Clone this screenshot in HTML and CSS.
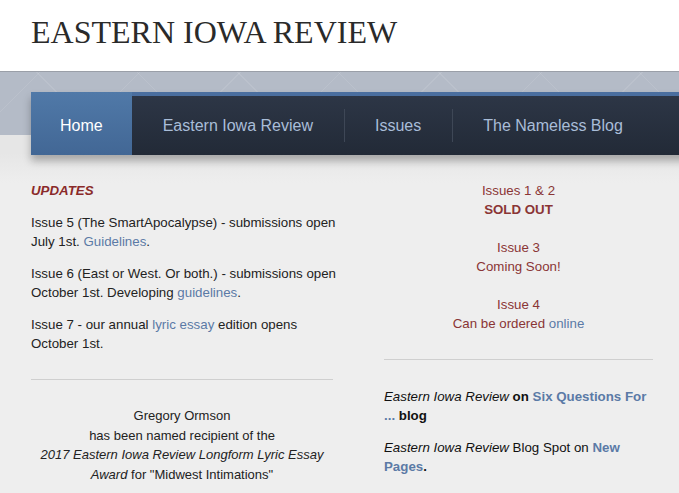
FILE: index.html
```html
<!DOCTYPE html>
<html lang="en">

<head>
    <meta charset="UTF-8">
    <title>Eastern Iowa Review</title>
    <link rel="stylesheet" href="styles.css">
</head>

<body>
    <div class="header">
        <h1 class="site-title">EASTERN IOWA REVIEW</h1>
    </div>
    <div class="band">
        <ul class="nav">
            <li class="current"><a href="#">Home</a></li>
            <li><a href="#">Eastern Iowa Review</a></li>
            <li><a href="#">Issues</a></li>
            <li><a href="#">The Nameless Blog</a></li>
        </ul>
    </div>
    <div class="main">
        <div class="col-left">
            <p class="updates">UPDATES</p>
            <p>Issue 5 (The SmartApocalypse) - submissions open July 1st. <a href="#">Guidelines</a>.</p>
            <p>Issue 6 (East or West. Or both.) - submissions open October 1st. Developing <a href="#">guidelines</a>.</p>
            <p>Issue 7 - our annual <a href="#">lyric essay</a> edition opens October 1st.</p>
            <hr>
            <p class="award">Gregory Ormson<br>has been named recipient of the<br><em>2017 Eastern Iowa Review Longform Lyric Essay Award</em> for "Midwest Intimations"</p>
        </div>
        <div class="col-right">
            <p class="issue">Issues 1 &amp; 2<br><strong>SOLD OUT</strong></p>
            <p class="issue">Issue 3<br>Coming Soon!</p>
            <p class="issue">Issue 4<br>Can be ordered <a href="#">online</a></p>
            <hr>
            <p class="press"><em>Eastern Iowa Review</em> <strong>on <a href="#">Six Questions For ...</a> blog</strong></p>
            <p class="press"><em>Eastern Iowa Review</em> Blog Spot on <strong><a href="#">New Pages</a>.</strong></p>
        </div>
    </div>
</body>

</html>
```

FILE: styles.css
```css
* {
    padding: 0;
    margin: 0;
}
html, body {
    overflow: hidden;
}
body {
    background: #eee;
    font-family: "Liberation Sans", Arial, sans-serif;
    font-size: 13.3px;
    line-height: 19px;
    color: #222;
}
a {
    color: #5b7aa6;
    text-decoration: none;
}
.header {
    height: 71px;
    background: #fff;
}
.site-title {
    padding: 12px 0 0 31px;
    font-family: "Liberation Serif", "Times New Roman", serif;
    font-weight: normal;
    font-size: 32px;
    line-height: 40px;
    color: #2a2a2a;
    white-space: nowrap;
}
.band {
    height: 43px;
    padding-top: 20px;
    border-top: 1px solid #9a9fa8;
    background-color: #b4bbc7;
    background-image:
        repeating-linear-gradient(45deg, transparent 0, transparent 70px, rgba(255, 255, 255, 0.09) 70px, rgba(255, 255, 255, 0.09) 71px),
        repeating-linear-gradient(-45deg, transparent 0, transparent 70px, rgba(255, 255, 255, 0.09) 70px, rgba(255, 255, 255, 0.09) 71px);
}
.nav {
    list-style: none;
    display: flex;
    width: 929px;
    height: 59px;
    margin-left: 31px;
    border-top: 4px solid #4a6e9f;
    background: linear-gradient(#2d3646, #222a37);
    box-shadow: 0 6px 8px rgba(0, 0, 0, 0.28);
    position: relative;
}
.nav li {
    display: flex;
    align-items: center;
    padding: 0 31px;
    position: relative;
}
.nav li + li::before {
    content: "";
    position: absolute;
    left: 0;
    top: 13px;
    bottom: 13px;
    border-left: 1px solid #3e4756;
}
.nav li:nth-child(2)::before {
    display: none;
}
.nav a {
    font-size: 16px;
    color: #a9bdd8;
}
.nav li.current {
    margin-top: -4px;
    padding: 4px 29px 0 29px;
    background: linear-gradient(#5079a8, #426795);
}
.nav li.current a {
    color: #fff;
}
.main {
    display: flex;
    padding: 46px 0 0 31px;
    background: linear-gradient(#e6e6e6 18px, #eee 48px);
}
.col-left {
    width: 302px;
}
.col-left p {
    margin-right: -3px;
}
.col-right {
    width: 269px;
    margin-left: 51px;
}
p {
    margin-bottom: 13px;
}
.updates {
    font-weight: bold;
    font-style: italic;
    color: #8a2a2a;
    margin-bottom: 13px;
}
hr {
    border: 0;
    border-top: 1px solid #cfcfcf;
    margin: 26px 0 26px 0;
}
.col-left .award {
    text-align: center;
    line-height: 19.5px;
    font-size: 13px;
    margin-right: 0;
}
.issue {
    text-align: center;
    color: #8a3535;
    margin-bottom: 19px;
}
.col-right hr {
    margin: 26px 0 27px 0;
}
.press {
    color: #111;
    margin-bottom: 13px;
}
.press a {
    color: #5b7aa6;
}
```
